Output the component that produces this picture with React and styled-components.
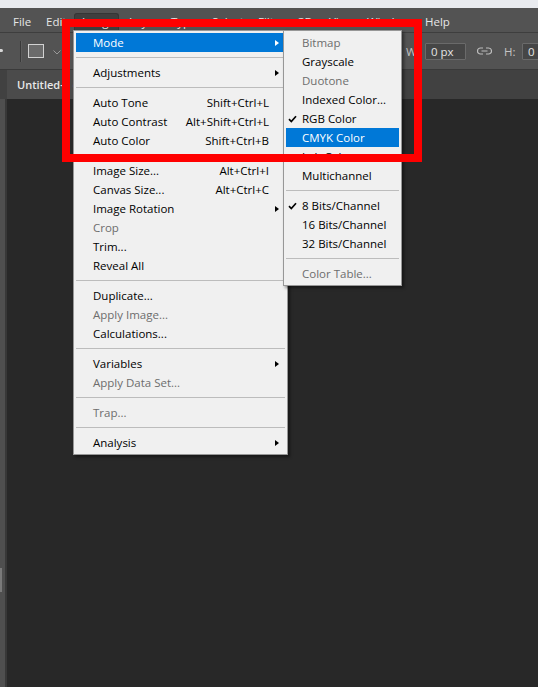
import React from 'react';
import styled, { createGlobalStyle } from 'styled-components';

const Global = createGlobalStyle`
  html, body { margin: 0; padding: 0; background: #282828; }
  body { font-family: "Open Sans", "Noto Sans", Arial, sans-serif; }
  * { box-sizing: border-box; }
`;

const Screen = styled.div`
  position: relative;
  width: 538px;
  height: 687px;
  overflow: hidden;
  display: flex;
  flex-direction: column;
  background: #282828;
  font-size: 11.5px;
`;

const TitleStrip = styled.div`
  flex: none;
  height: 8px;
  background: #e9ebef;
`;

const MenuBar = styled.div`
  flex: none;
  height: 25px;
  display: flex;
  align-items: stretch;
  padding: 0 0 0 5px;
  background: #535353;
  border-bottom: 1px solid #3e3e3e;
`;

const MenuTitle = styled.div`
  flex: none;
  width: ${p => p.$w}px;
  margin-right: ${p => (p.$open ? 2 : 0)}px;
  margin-top: 5px;
  padding-left: 7px;
  line-height: 15px;
  color: #e6e6e6;
  white-space: nowrap;
  background: ${p => (p.$open ? '#3f3f3f' : 'transparent')};
  border: 1px solid ${p => (p.$open ? '#363636' : 'transparent')};
  border-bottom: none;
  border-radius: 3px 3px 0 0;
`;

const ToolBar = styled.div`
  flex: none;
  height: 36px;
  display: flex;
  align-items: center;
  background: #535353;
  white-space: nowrap;
  overflow: hidden;
`;

const Tick = styled.div`
  flex: none;
  width: 3px;
  height: 3px;
  margin-top: -2px;
  background: #d8d8d8;
  border-radius: 0 2px 2px 0;
`;

const Divider = styled.div`
  flex: none;
  width: 1px;
  height: 21px;
  margin-left: 17px;
  background: #3a3a3a;
  box-shadow: 1px 0 0 #5e5e5e;
`;

const ShapeSwatch = styled.div`
  flex: none;
  width: 16px;
  height: 14px;
  margin-left: 7px;
  background: #6b6b6b;
  border: 1px solid #d2d2d2;
`;

const Chevron = styled.svg`
  flex: none;
  margin-left: 9px;
  margin-top: 2px;
`;

const FieldLabel = styled.div`
  flex: none;
  width: ${p => p.$w}px;
  margin-left: ${p => p.$ml}px;
  color: #c4c4c4;
`;

const Field = styled.div`
  flex: none;
  width: 41px;
  height: 17px;
  margin-left: ${p => p.$ml}px;
  padding-left: 5px;
  line-height: 15px;
  color: #e4e4e4;
  background: #464646;
  border: 1px solid #6a6a6a;
  border-radius: 1px;
`;

const LinkIcon = styled.svg`
  flex: none;
  margin-left: ${p => p.$ml}px;
`;

const TabBar = styled.div`
  flex: none;
  height: 30px;
  display: flex;
  background: #414141;
  border-top: 1px solid #3a3a3a;
`;

const DocTab = styled.div`
  flex: none;
  width: 230px;
  margin-left: 7px;
  padding: 7px 0 0 10px;
  font-size: 11px;
  font-weight: 600;
  color: #e8e8e8;
  background: #4b4b4b;
  white-space: nowrap;
`;

const Workspace = styled.div`
  flex: 1;
  display: flex;
`;

const SideStrip = styled.div`
  flex: none;
  width: 7px;
  display: flex;
  flex-direction: column;
  background: #4f4f4f;
  border-right: 2px solid #383838;
`;

const ScrollGrip = styled.div`
  width: 2px;
  height: 24px;
  margin-top: 469px;
  background: #7a7a7a;
`;

const Canvas = styled.div`
  flex: 1;
  background: #282828;
`;

/* dropdown menus */
const Dropdown = styled.div`
  position: absolute;
  left: ${p => p.$x}px;
  top: ${p => p.$y}px;
  width: ${p => p.$w}px;
  padding: 2px;
  background: #f0f0f0;
  border: 1px solid #979797;
  box-shadow: 2px 2px 3px rgba(0, 0, 0, 0.45);
  font-family: "Open Sans", "Noto Sans", Arial, sans-serif;
  font-size: 11.5px;
  z-index: ${p => p.$z};
`;

const Row = styled.div`
  height: 19px;
  display: flex;
  align-items: center;
  padding-left: ${p => p.$pl}px;
  color: ${p => (p.$active ? '#ffffff' : p.$disabled ? '#6d6d6d' : '#000000')};
  background: ${p => (p.$active ? '#0078d7' : 'transparent')};
  white-space: nowrap;
`;

const CheckSlot = styled.div`
  flex: none;
  width: 16px;
  height: 19px;
  display: flex;
  align-items: center;
  padding-left: 2px;
`;

const Label = styled.span`
  flex: 1;
  padding-bottom: 1px;
`;

const Shortcut = styled.span`
  flex: none;
  margin-right: 6px;
  padding-bottom: 1px;
`;

const ArrowSlot = styled.div`
  flex: none;
  width: 10px;
  display: flex;
  align-items: center;
`;

const Arrow = styled.div`
  width: 0;
  height: 0;
  border-left: 4px solid ${p => (p.$active ? '#ffffff' : '#000000')};
  border-top: 3.5px solid transparent;
  border-bottom: 3.5px solid transparent;
`;

const Separator = styled.div`
  height: 11px;
  display: flex;
  align-items: center;
  &::after {
    content: '';
    flex: 1;
    height: 1px;
    background: #bcbcbc;
  }
`;

const Annotation = styled.div`
  position: absolute;
  left: 62px;
  top: 19px;
  width: 360px;
  height: 143px;
  border: 8px solid #ff0000;
  z-index: 10;
  pointer-events: none;
`;

const menuTitles = [
  ['File', 33], ['Edit', 36], ['Image', 45, true], ['Layer', 42], ['Type', 41],
  ['Select', 46], ['Filter', 40], ['3D', 31], ['View', 38], ['Window', 58], ['Help', 40],
];

const imageMenu = [
  { label: 'Mode', arrow: true, active: true },
  'sep',
  { label: 'Adjustments', arrow: true },
  'sep',
  { label: 'Auto Tone', shortcut: 'Shift+Ctrl+L' },
  { label: 'Auto Contrast', shortcut: 'Alt+Shift+Ctrl+L' },
  { label: 'Auto Color', shortcut: 'Shift+Ctrl+B' },
  'sep',
  { label: 'Image Size...', shortcut: 'Alt+Ctrl+I' },
  { label: 'Canvas Size...', shortcut: 'Alt+Ctrl+C' },
  { label: 'Image Rotation', arrow: true },
  { label: 'Crop', disabled: true },
  { label: 'Trim...' },
  { label: 'Reveal All' },
  'sep',
  { label: 'Duplicate...' },
  { label: 'Apply Image...', disabled: true },
  { label: 'Calculations...' },
  'sep',
  { label: 'Variables', arrow: true },
  { label: 'Apply Data Set...', disabled: true },
  'sep',
  { label: 'Trap...', disabled: true },
  'sep',
  { label: 'Analysis', arrow: true },
];

const modeMenu = [
  { label: 'Bitmap', disabled: true },
  { label: 'Grayscale' },
  { label: 'Duotone', disabled: true },
  { label: 'Indexed Color...' },
  { label: 'RGB Color', checked: true },
  { label: 'CMYK Color', active: true },
  { label: 'Lab Color' },
  { label: 'Multichannel' },
  'sep',
  { label: '8 Bits/Channel', checked: true },
  { label: '16 Bits/Channel' },
  { label: '32 Bits/Channel' },
  'sep',
  { label: 'Color Table...', disabled: true },
];

const Check = ({ color }) => (
  <svg width="9" height="8" viewBox="0 0 9 8">
    <path d="M1 4.2 L3.3 6.5 L8 1.2" fill="none" stroke={color} strokeWidth="1.7" />
  </svg>
);

export default function App() {
  return (
    <>
      <Global />
      <Screen>
        <TitleStrip />
        <MenuBar>
          {menuTitles.map(([t, w, open]) => (
            <MenuTitle key={t} $w={w} $open={open}>{t}</MenuTitle>
          ))}
        </MenuBar>
        <ToolBar>
          <Tick />
          <Divider />
          <ShapeSwatch />
          <Chevron width="8" height="5" viewBox="0 0 8 5">
            <path d="M0.5 0.5 L4 4 L7.5 0.5" fill="none" stroke="#9a9a9a" strokeWidth="1" />
          </Chevron>
          <FieldLabel $w={12} $ml={345}>W:</FieldLabel>
          <Field $ml={7}>0 px</Field>
          <LinkIcon $ml={11} width="15" height="8" viewBox="0 0 15 8">
            <path
              d="M6 1 H3.5 A3 3 0 0 0 3.5 7 H6 M9 1 H11.5 A3 3 0 0 1 11.5 7 H9 M4.5 4 H10.5"
              fill="none"
              stroke="#bdbdbd"
              strokeWidth="1.2"
            />
          </LinkIcon>
          <FieldLabel $w={11} $ml={12}>H:</FieldLabel>
          <Field $ml={7}>0 px</Field>
        </ToolBar>
        <TabBar>
          <DocTab>Untitled-1 @ 66.7% (RGB/8)</DocTab>
        </TabBar>
        <Workspace>
          <SideStrip>
            <ScrollGrip />
          </SideStrip>
          <Canvas />
        </Workspace>

        <Dropdown $x={73} $y={30} $w={215} $z={2}>
          {imageMenu.map((it, i) =>
            it === 'sep' ? (
              <Separator key={i} />
            ) : (
              <Row key={i} $pl={17} $active={it.active} $disabled={it.disabled}>
                <Label>{it.label}</Label>
                {it.shortcut && <Shortcut>{it.shortcut}</Shortcut>}
                <ArrowSlot>{it.arrow && <Arrow $active={it.active} />}</ArrowSlot>
              </Row>
            )
          )}
        </Dropdown>

        <Dropdown $x={283} $y={30} $w={119} $z={3}>
          {modeMenu.map((it, i) =>
            it === 'sep' ? (
              <Separator key={i} />
            ) : (
              <Row key={i} $pl={0} $active={it.active} $disabled={it.disabled}>
                <CheckSlot>{it.checked && <Check color={it.active ? '#fff' : '#000'} />}</CheckSlot>
                <Label>{it.label}</Label>
              </Row>
            )
          )}
        </Dropdown>

        <Annotation />
      </Screen>
    </>
  );
}
